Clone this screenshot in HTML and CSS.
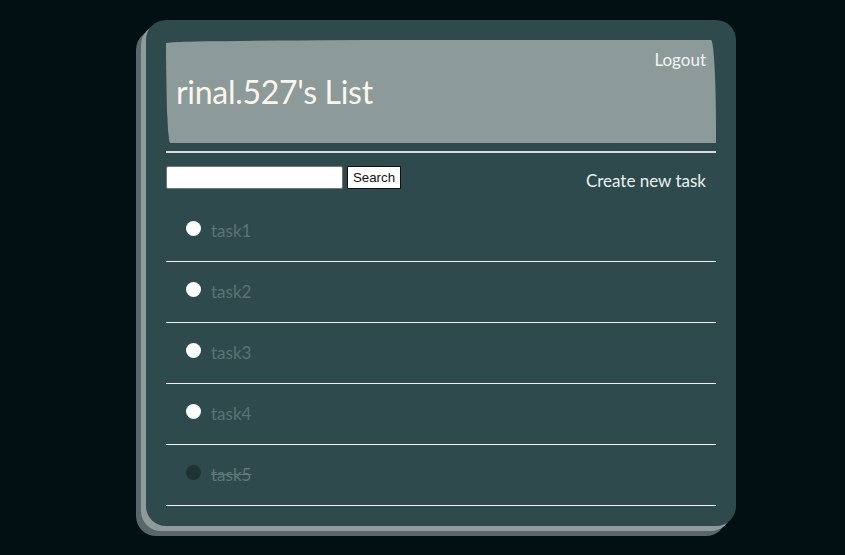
FILE: index.html
```html
<!DOCTYPE html>
<html>
<head>
<meta charset="utf-8">
<link rel="stylesheet" href="styles.css">
</head>
<body>
<main class="card">
  <header class="head">
    <a class="logout">Logout</a>
    <h1 class="title">rinal.527's List</h1>
  </header>
  <div class="toolbar">
    <form class="search">
      <input class="search-input" type="text">
      <button class="search-btn" type="button">Search</button>
    </form>
    <a class="create">Create new task</a>
  </div>
  <ul class="tasks">
    <li class="task"><span class="dot"></span><span class="name">task1</span></li>
    <li class="task"><span class="dot"></span><span class="name">task2</span></li>
    <li class="task"><span class="dot"></span><span class="name">task3</span></li>
    <li class="task"><span class="dot"></span><span class="name">task4</span></li>
    <li class="task done"><span class="dot"></span><span class="name">task5</span></li>
  </ul>
</main>
</body>
</html>
```
FILE: styles.css
```css
html, body {
  margin: 0;
  padding: 0;
}
body {
  background: #020f13;
  font-family: Lato, "Noto Sans", sans-serif;
  padding-top: 20px;
  height: 555px;
  box-sizing: border-box;
}
.card {
  margin-left: 146px;
  width: 590px;
  height: 506px;
  box-sizing: border-box;
  padding: 20px;
  background: #2f4a4d;
  border-radius: 20px;
  box-shadow: -5px 5px 0 #8f9a9a, -10px 10px 0 #59676a;
}
.head {
  background: #8d9a9a;
  border-radius: 250px 5px 250px 4px / 3px 90px 5px 100px;
  padding: 10px 10px 0 10px;
  box-sizing: border-box;
  display: flex;
  flex-direction: column;
  border-bottom: 8px solid #2f4a4d;
  height: 111px;
  background-clip: padding-box;
}
.logout {
  align-self: flex-end;
  color: #f1f5f5;
  font-size: 17px;
  line-height: 20px;
}
.title {
  margin: 4px 0 0 0;
  font-weight: 400;
  font-size: 32px;
  line-height: 36px;
  color: #fbf6ec;
  letter-spacing: -0.3px;
}
.toolbar {
  border-top: 2px solid #dcdcdc;
  display: flex;
  justify-content: space-between;
  align-items: flex-start;
  padding-top: 13px;
  height: 50px;
  box-sizing: border-box;
}
.search {
  display: flex;
  gap: 4px;
  margin: 0;
}
.search-input {
  width: 177px;
  height: 23px;
  box-sizing: border-box;
  border: 1px solid #767676;
  border-radius: 2px;
  background: #fff;
  padding: 0 4px;
}
.search-btn {
  height: 23px;
  width: 54px;
  box-sizing: border-box;
  background: #fff;
  border: 1px solid #111;
  border-radius: 0;
  font-family: "Liberation Sans", Arial, sans-serif;
  font-size: 13.3px;
  color: #111;
  padding: 0;
}
.create {
  color: #e9f1f1;
  font-size: 17px;
  line-height: 20px;
  margin-top: 5px;
  margin-right: 10px;
}
.tasks {
  list-style: none;
  margin: 0;
  padding: 0;
}
.task {
  height: 61px;
  box-sizing: border-box;
  border-bottom: 1px solid #f2f2f2;
  display: flex;
  align-items: center;
  padding-left: 20px;
}
.dot {
  width: 15px;
  height: 15px;
  border-radius: 50%;
  background: #ffffff;
  margin-right: 10px;
  margin-top: -5px;
}
.name {
  color: #5a7373;
  font-size: 17px;
  line-height: 20px;
}
.done .dot {
  background: #1f3234;
}
.done .name {
  text-decoration: line-through;
  color: #5f7878;
}
```
